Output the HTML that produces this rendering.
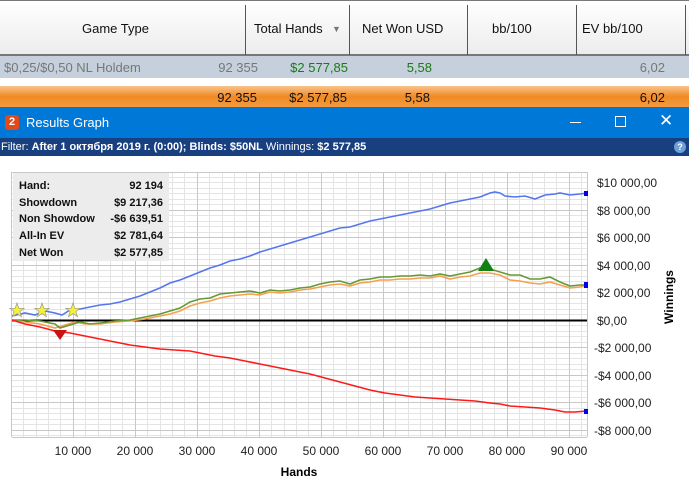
<!DOCTYPE html>
<html><head><meta charset="utf-8"><style>
*{margin:0;padding:0;box-sizing:border-box}
body{width:689px;height:482px;overflow:hidden;background:#fff;font-family:"Liberation Sans","DejaVu Sans",sans-serif;position:relative}
.a{position:absolute}
.hdr{top:0;left:0;width:689px;height:56px;background:linear-gradient(#fff,#ececec);border-top:1px solid #777;border-bottom:2px solid #777}
.sep{position:absolute;top:4px;width:1px;height:50px;background:#555}
.ht{position:absolute;top:20px;font-size:13px;color:#111}
.row{top:56px;left:0;width:689px;height:22px;background:#c5d0dc;font-size:13px;color:#777}
.row span,.org span{position:absolute;top:4px}
.org{top:86px;left:0;width:689px;height:21px;background:linear-gradient(#f9c48c,#f08a24 50%,#f39a40);font-size:13px;color:#111}
.title{top:107px;left:0;width:689px;height:31px;background:#0078d7;color:#fff;font-size:13px}
.filter{top:138px;left:0;width:689px;height:18px;background:#183f80;color:#fff;font-size:11px;line-height:18px;padding-left:1px}
</style></head><body>
<div class="a hdr">
<div class="ht" style="left:82px">Game Type</div>
<div class="sep" style="left:245px"></div>
<div class="ht" style="left:254px">Total Hands</div>
<div class="ht" style="left:332px;font-size:9px;top:23px;color:#777">▼</div>
<div class="sep" style="left:349px"></div>
<div class="ht" style="left:362px">Net Won USD</div>
<div class="sep" style="left:467px"></div>
<div class="ht" style="left:492px">bb/100</div>
<div class="sep" style="left:576px"></div>
<div class="ht" style="left:582px">EV bb/100</div>
<div class="sep" style="left:685px"></div>
</div>
<div class="a row">
<span style="left:4px">$0,25/$0,50 NL Holdem</span>
<span style="right:431px">92 355</span>
<span style="right:341px;color:#1a7a1a">$2 577,85</span>
<span style="right:257px;color:#1a7a1a">5,58</span>
<span style="right:24px">6,02</span>
</div>
<div class="a org">
<span style="right:432px">92 355</span>
<span style="right:342px">$2 577,85</span>
<span style="right:259px">5,58</span>
<span style="right:24px">6,02</span>
</div>
<div class="a title">
<div class="a" style="left:5px;top:8px;width:14px;height:15px;background:#e04a1a;border-radius:3px;font-size:11px;font-weight:bold;text-align:center;line-height:15px">2</div>
<div class="a" style="left:26px;top:8px">Results Graph</div>
<div class="a" style="left:570px;top:15px;width:11px;height:1px;background:#fff"></div>
<div class="a" style="left:615px;top:9px;width:11px;height:11px;border:1px solid #fff"></div>
<div class="a" style="left:659px;top:4px;font-size:17px">✕</div>
</div>
<div class="a filter">Filter: <b>After 1 октября 2019 г. (0:00); Blinds: $50NL</b> Winnings: <b>$2 577,85</b>
<div class="a" style="right:3px;top:3px;width:12px;height:12px;border-radius:6px;background:#6d9fd8;font-size:9px;text-align:center;line-height:12px;font-weight:bold">?</div></div>

<svg class="a" style="left:0;top:156px" width="689" height="326" viewBox="0 156 689 326">
<g stroke="#e4e4e4" stroke-width="1">
<path d="M12 177.5H587M12 182.5H587M12 188.5H587M12 193.5H587M12 199.5H587M12 204.5H587M12 215.5H587M12 221.5H587M12 226.5H587M12 232.5H587M12 243.5H587M12 248.5H587M12 254.5H587M12 259.5H587M12 270.5H587M12 276.5H587M12 281.5H587M12 287.5H587M12 298.5H587M12 303.5H587M12 309.5H587M12 314.5H587M12 325.5H587M12 331.5H587M12 336.5H587M12 342.5H587M12 353.5H587M12 358.5H587M12 364.5H587M12 369.5H587M12 380.5H587M12 386.5H587M12 391.5H587M12 397.5H587M12 408.5H587M12 413.5H587M12 419.5H587M12 424.5H587M12 435.5H587"/>
<path d="M23.5 172V437M36.5 172V437M48.5 172V437M60.5 172V437M85.5 172V437M98.5 172V437M110.5 172V437M122.5 172V437M147.5 172V437M160.5 172V437M172.5 172V437M184.5 172V437M209.5 172V437M222.5 172V437M234.5 172V437M246.5 172V437M271.5 172V437M284.5 172V437M296.5 172V437M308.5 172V437M333.5 172V437M346.5 172V437M358.5 172V437M370.5 172V437M395.5 172V437M408.5 172V437M420.5 172V437M432.5 172V437M457.5 172V437M470.5 172V437M482.5 172V437M494.5 172V437M519.5 172V437M532.5 172V437M544.5 172V437M556.5 172V437M581.5 172V437"/>
</g>
<g stroke="#c8c8c8" stroke-width="1">
<path d="M12 172.5H587M12 210.5H587M12 237.5H587M12 265.5H587M12 292.5H587M12 347.5H587M12 375.5H587M12 402.5H587M12 430.5H587M12 437.5H587"/>
<path d="M11.5 172V437M73.5 172V437M135.5 172V437M197.5 172V437M259.5 172V437M321.5 172V437M383.5 172V437M445.5 172V437M507.5 172V437M569.5 172V437M587.5 172V437"/>
</g>
<rect x="13" y="173" width="156" height="88" fill="#ececec"/>
<g font-size="11" font-weight="bold" fill="#111">
<text x="19" y="189">Hand:</text><text x="163" y="189" text-anchor="end">92 194</text>
<text x="19" y="206">Showdown</text><text x="163" y="206" text-anchor="end">$9 217,36</text>
<text x="19" y="222">Non Showdow</text><text x="163" y="222" text-anchor="end">-$6 639,51</text>
<text x="19" y="239">All-In EV</text><text x="163" y="239" text-anchor="end">$2 781,64</text>
<text x="19" y="256">Net Won</text><text x="163" y="256" text-anchor="end">$2 577,85</text>
</g>
<path d="M12 320.5H587" stroke="#000" stroke-width="2"/>
<polyline fill="none" stroke="#5577ee" stroke-width="1.6" points="12,316 25,313 35,315 45,311 55,313 62,315 70,310 80,309 90,307 100,305 110,304 120,302 130,299 140,296 150,292 160,288 170,283 180,280 190,276 200,272 210,268 220,265 230,261 240,259 250,256 260,252 270,249 280,246 290,243 300,240 310,237 320,234 330,231 340,228 350,227 360,224 370,221 380,219 390,217 400,215 410,213 420,211 430,209 440,206 450,203 460,201 470,199 480,197 490,193 495,192 500,193 505,196 515,197 525,196 535,199 545,195 555,194 560,193 570,195 580,194 587,193"/>
<polyline fill="none" stroke="#f5a050" stroke-width="1.6" points="12,320 25,322 40,324 55,328 65,325 75,322 85,324 100,324 115,322 130,321 145,319 160,316 170,314 180,311 190,306 200,303 210,301 220,298 230,296 240,295 250,294 260,295 270,292 280,293 290,292 300,290 310,289 320,287 330,285 340,284 350,286 360,283 370,282 380,280 390,280 400,279 410,279 420,278 430,278 440,276 450,279 460,277 470,276 480,273 490,273 500,275 510,280 520,281 530,283 540,284 550,282 560,285 570,288 580,287 587,285"/>
<polyline fill="none" stroke="#669933" stroke-width="1.6" points="12,320 25,320 40,321 55,324 60,328 70,325 80,322 90,324 100,323 115,321 130,320 145,317 160,314 170,311 180,308 190,302 200,299 210,298 220,294 230,293 240,292 250,291 260,293 270,290 280,291 290,290 300,288 310,287 320,284 330,282 340,281 350,284 360,280 370,279 380,277 390,277 400,276 410,276 420,275 430,276 440,274 450,276 460,274 470,272 480,268 490,269 500,272 510,275 520,275 530,279 540,279 550,277 560,282 570,286 580,285 587,285"/>
<polyline fill="none" stroke="#ff1a1a" stroke-width="1.6" points="12,320 25,324 40,327 55,331 70,333 85,336 100,339 115,342 130,345 145,347 160,349 175,350 190,351 200,353 215,356 230,358 245,361 260,364 275,367 290,370 300,372 310,374 325,378 340,382 355,386 370,390 385,393 400,395 415,397 430,398 445,399 460,400 475,401 490,403 500,404 510,406 525,407 540,408 555,410 565,412 575,412 587,411"/>
<rect x="584" y="191" width="4" height="5" fill="#0000ee"/>
<rect x="584" y="282" width="4" height="6" fill="#0000ee"/>
<rect x="584" y="409" width="4" height="5" fill="#0000ee"/>
<path d="M478 271L486 258L494 271Z" fill="#128012"/>
<path d="M53 330L60 340L67 330Z" fill="#cc1111"/>
<g fill="#f5f03a" stroke="#999" stroke-width="0.7">
<path id="st" d="M17 303L18.8 308.3H24.2L19.9 311.5L21.5 316.8L17 313.6L12.5 316.8L14.1 311.5L9.8 308.3H15.2Z"/>
<use href="#st" x="25"/><use href="#st" x="56"/>
</g>
<g font-size="12" fill="#222">
<text x="597" y="187">$10 000,00</text><text x="597" y="215">$8 000,00</text><text x="597" y="242">$6 000,00</text><text x="597" y="270">$4 000,00</text><text x="597" y="297">$2 000,00</text><text x="597" y="325">$0,00</text><text x="594" y="352">-$2 000,00</text><text x="594" y="380">-$4 000,00</text><text x="594" y="407">-$6 000,00</text><text x="594" y="435">-$8 000,00</text>
</g>
<g font-size="12" fill="#222" text-anchor="middle">
<text x="73" y="455">10 000</text><text x="135" y="455">20 000</text><text x="197" y="455">30 000</text><text x="259" y="455">40 000</text><text x="321" y="455">50 000</text><text x="383" y="455">60 000</text><text x="445" y="455">70 000</text><text x="507" y="455">80 000</text><text x="569" y="455">90 000</text>
</g>
<text x="299" y="476" font-size="12" font-weight="bold" text-anchor="middle">Hands</text>
<text transform="translate(673 297) rotate(-90)" font-size="12" font-weight="bold" text-anchor="middle">Winnings</text>
</svg>
</body></html>
